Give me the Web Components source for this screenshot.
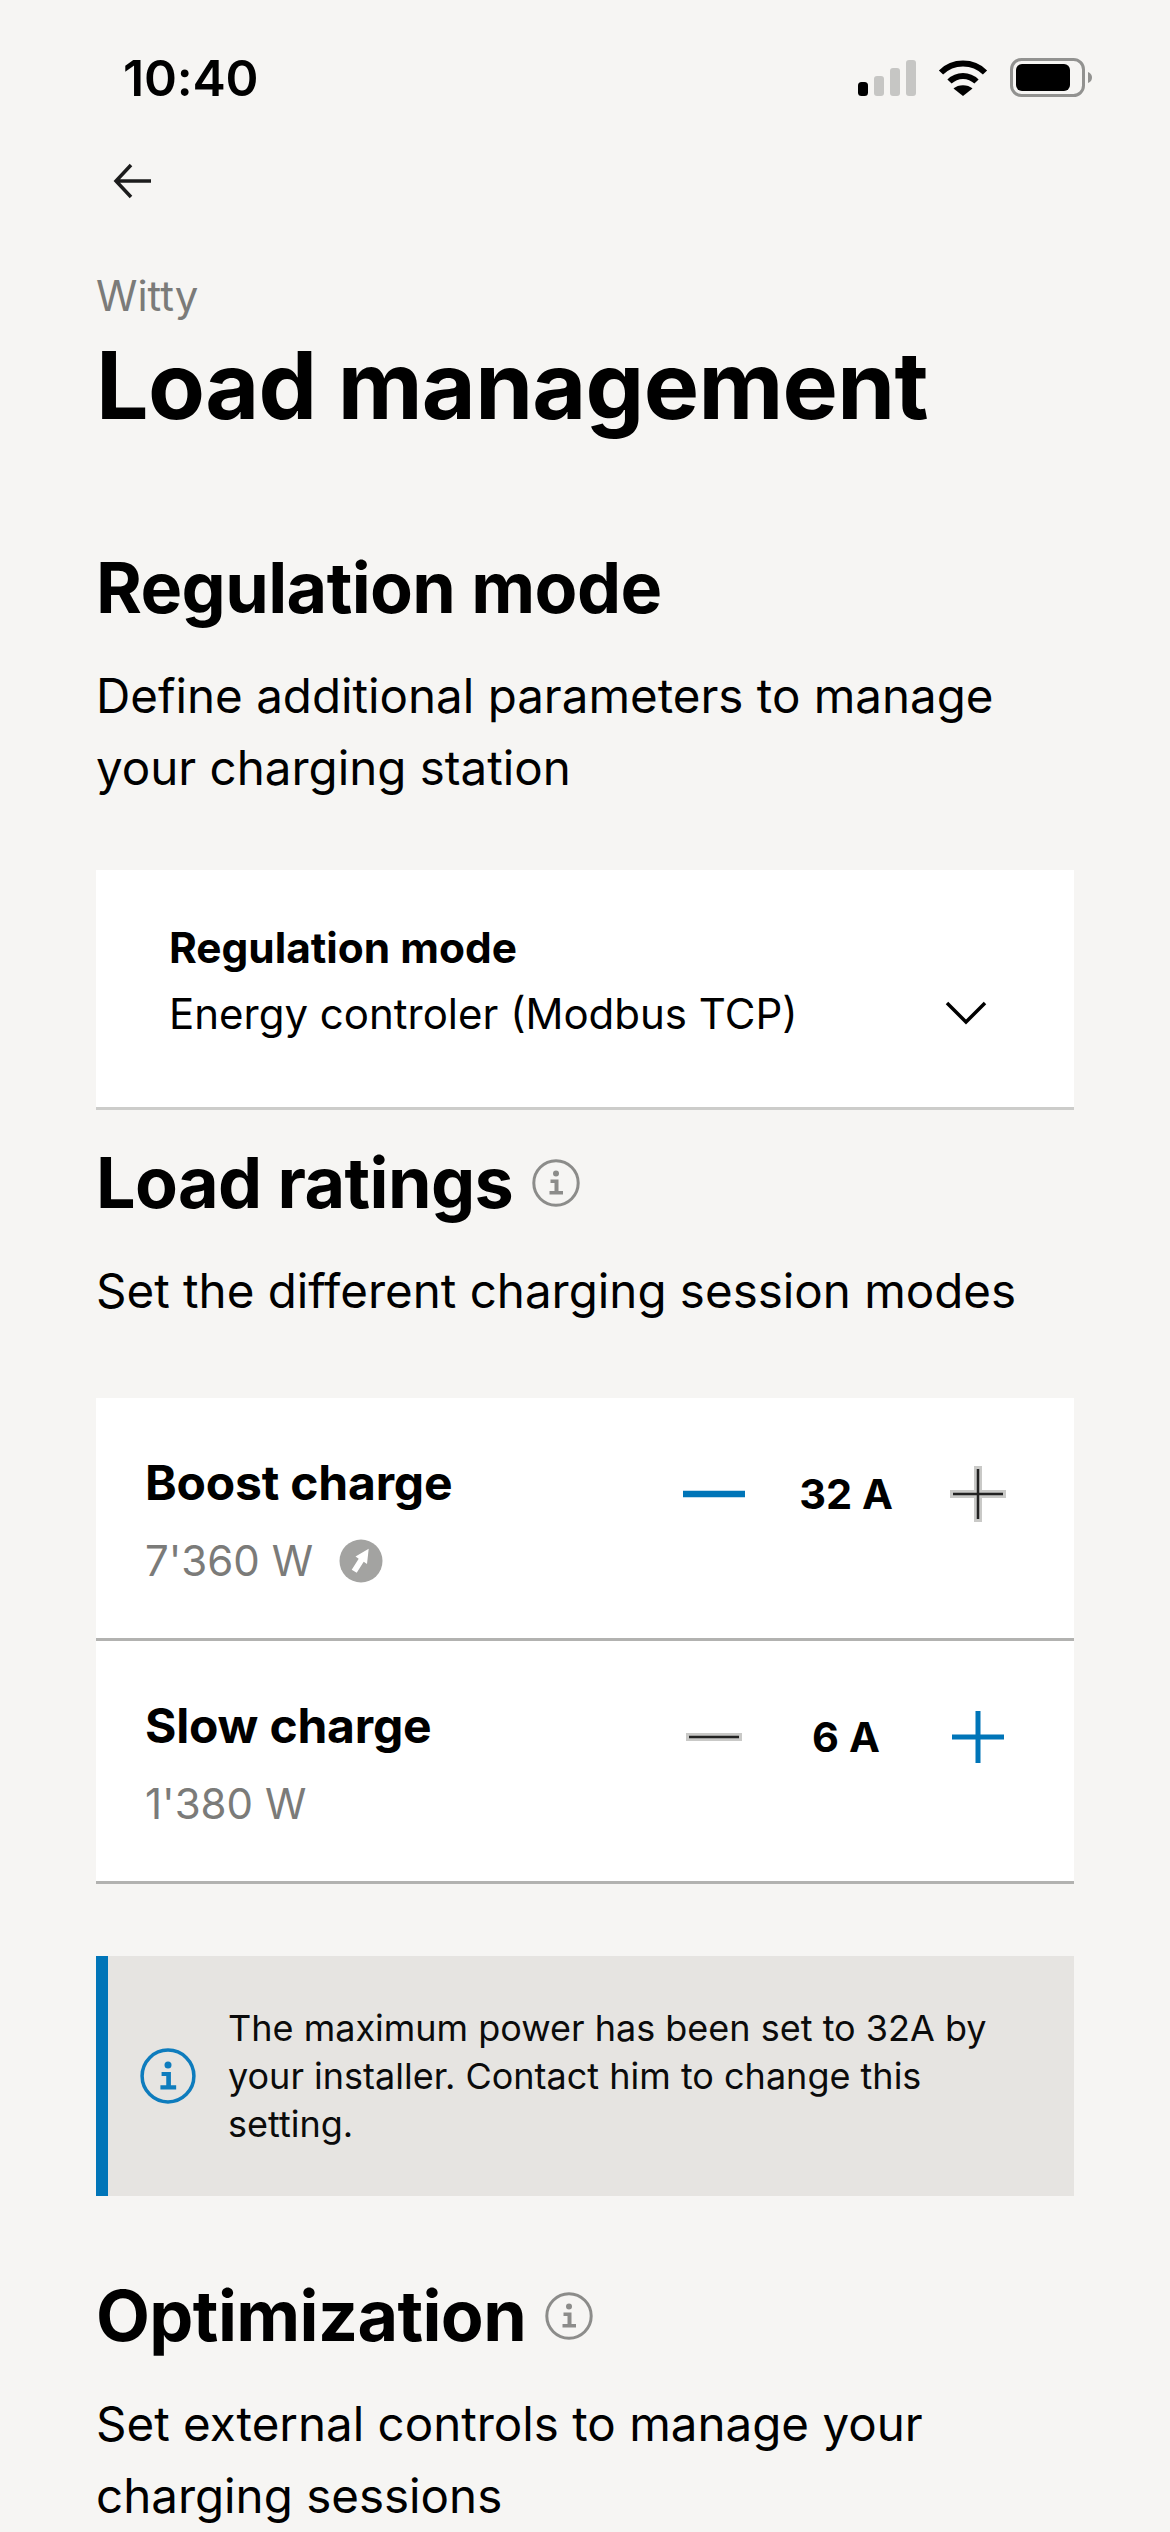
<!DOCTYPE html>
<html lang="en">
<head>
<meta charset="utf-8">
<title>Load management</title>
<style>
	html, body { margin: 0; height: 2532px; overflow: hidden; background: #f6f5f3; }
	body { font-family: Inter, "Liberation Sans", sans-serif; color: #000; }
	app-page { padding: 0 96px; }
</style>
</head>
<body>

<template id="t-info">
	<style>
		:host { display: inline-flex; width: var(--size, 48px); height: var(--size, 48px); color: #8c8c8a; flex: none; }
		svg { width: 100%; height: 100%; display: block; }
	</style>
	<svg viewBox="0 0 48 48" fill="none">
		<circle cx="24" cy="24" r="22.2" stroke="currentColor" stroke-width="3"/>
		<circle cx="24" cy="14.5" r="3" fill="currentColor"/>
		<path d="M18.5 20.5h8v11.5h4.5v3.5H17.5V32h5v-8h-4z" fill="currentColor"/>
	</svg>
</template>

<template id="t-status">
	<style>
		:host { display: flex; justify-content: space-between; align-items: center; height: 50px; padding: 53px 0 0 27px; margin-right: -18px; }
		.time { font-size: 50px; font-weight: 600; letter-spacing: -0.2px; line-height: 50px; }
		.icons { display: flex; align-items: center; gap: 22px; }
		svg { display: block; }
	</style>
	<span class="time">10:40</span>
	<span class="icons">
		<svg width="58" height="38" viewBox="0 0 58 38">
			<rect x="0" y="23" width="10" height="14" rx="3.5" fill="#000"/>
			<rect x="16" y="17" width="10" height="20" rx="3" fill="#c6c6c4"/>
			<rect x="32" y="9" width="10" height="28" rx="3" fill="#c6c6c4"/>
			<rect x="48" y="1" width="10" height="36" rx="3" fill="#c6c6c4"/>
		</svg>
		<svg width="50" height="38" viewBox="0 0 50 38" fill="none" stroke="#000" stroke-width="6">
			<path d="M3 13.5C15 1.5 35 1.5 47 13.5"/>
			<path d="M11.5 22.5C19 15 31 15 38.5 22.5"/>
			<path d="M25 37L15.5 29.5C20 25 30 25 34.5 29.5Z" fill="#000" stroke="none"/>
		</svg>
		<svg width="82" height="40" viewBox="0 0 82 40">
			<rect x="1.5" y="1.5" width="72" height="36" rx="10" fill="none" stroke="#929290" stroke-width="3"/>
			<rect x="6" y="6" width="54" height="27" rx="6" fill="#000"/>
			<path d="M78 14c3 1 4 3.500 4 5.500s-1 4.500-4 5.500z" fill="#929290"/>
		</svg>
	</span>
</template>

<template id="t-header">
	<style>
		:host { display: block; }
		.back { display: block; margin: 60px 0 0 17px; }
		.over { font-size: 42px; line-height: 52px; color: #7b7b79; margin-top: 71px; }
		h1 { margin: 13px 0 0; font-size: 93px; line-height: 100px; font-weight: 700; letter-spacing: -0.7px; }
	</style>
	<svg class="back" width="40" height="36" viewBox="0 0 40 36" fill="none" stroke="#1c1c1c" stroke-width="3.500">
		<path d="M38 18H3M18 2L3 18l15 16"/>
	</svg>
	<div class="over"><slot name="over"></slot></div>
	<h1><slot></slot></h1>
</template>

<template id="t-section">
	<style>
		:host { display: block; margin-top: var(--top, 0); }
		.head { display: flex; align-items: center; gap: var(--gap, 19px); }
		h2 { margin: 0; font-size: 70px; line-height: 84px; font-weight: 700; letter-spacing: -0.6px; }
		p { margin: 30px 0 0; font-size: 47.5px; line-height: 72px; }
	</style>
	<div class="head"><h2><slot name="title"></slot></h2><slot name="hint"></slot></div>
	<p><slot name="text"></slot></p>
</template>

<template id="t-select">
	<style>
		:host { display: flex; align-items: center; justify-content: space-between; background: #fff; border-bottom: 3px solid #ccccca; margin: 66px 0 31px; padding: 50px 87px 65px 73px; }
		.label { font-size: 42.4px; line-height: 56px; font-weight: 700; }
		.value { font-size: 42px; line-height: 56px; margin-top: 10px; }
		svg { display: block; margin-top: 64px; }
	</style>
	<div>
		<div class="label"><slot name="label"></slot></div>
		<div class="value"><slot name="value"></slot></div>
	</div>
	<svg width="42" height="24" viewBox="0 0 42 24" fill="none" stroke="#000" stroke-width="3.500"><path d="M2 2l19 19L40 2"/></svg>
</template>

<template id="t-rating">
	<style>
		:host { display: flex; align-items: flex-start; justify-content: space-between; background: #fff; border-bottom: 3px solid #b2b2b0; padding: 56px 64px 0 49px; height: 184px; }
		.name { font-size: 48px; line-height: 58px; font-weight: 700; letter-spacing: -0.2px; }
		.watt { display: flex; align-items: center; gap: 26px; font-size: 42px; line-height: 56px; color: #7b7b79; margin-top: 21px; }
		.watt svg { display: block; }
		.step { display: flex; align-items: center; margin-top: 8px; height: 64px; }
		.val { width: 200px; text-align: center; font-size: 41.5px; font-weight: 700; line-height: 56px; }
		.ic { width: 64px; height: 64px; display: block; flex: none; }
	</style>
	<div>
		<div class="name"><slot name="name"></slot></div>
		<div class="watt"><slot name="watt"></slot><slot name="boost"></slot></div>
	</div>
	<div class="step">
		<svg class="ic minus" viewBox="0 0 64 64"></svg>
		<span class="val"><slot name="val"></slot></span>
		<svg class="ic plus" viewBox="0 0 64 64"></svg>
	</div>
</template>

<template id="t-boost">
	<style>
		:host { display: block; }
		svg { display: block; }
	</style>
	<svg width="44" height="44" viewBox="0 0 44 44">
		<circle cx="22" cy="22" r="21.500" fill="#a3a3a1"/>
		<path d="M29.700 9.750L16.500 17.500l3.200 2.150-7 11 5 3.200 7-11 3.300 2.150z" fill="#fff"/>
	</svg>
</template>

<template id="t-notice">
	<style>
		:host { display: flex; align-items: center; gap: 32px; background: #e6e4e1; border-left: 12px solid #0075b8; padding: 36px 60px 36px 32px; margin-top: 72px; height: 168px; }
		.txt { font-size: 36px; line-height: 48px; color: #0b0b0b; }
		info-icon { --size: 56px; color: #0e7cbd; }
	</style>
	<info-icon></info-icon>
	<div class="txt"><slot></slot></div>
</template>

<app-page>
	<status-bar></status-bar>
	<page-header><span slot="over">Witty</span>Load management</page-header>

	<page-section style="--top:111px">
		<span slot="title">Regulation mode</span>
		<span slot="text">Define additional parameters to manage<br>your charging station</span>
	</page-section>
	<select-card>
		<span slot="label">Regulation mode</span>
		<span slot="value">Energy controler (Modbus TCP)</span>
	</select-card>

	<page-section>
		<span slot="title">Load ratings</span>
		<info-icon slot="hint"></info-icon>
		<span slot="text">Set the different charging session modes</span>
	</page-section>
	<rating-list>
		<rating-row active="minus">
			<span slot="name">Boost charge</span>
			<span slot="watt">7'360 W</span>
			<boost-icon slot="boost"></boost-icon>
			<span slot="val">32 A</span>
		</rating-row>
		<rating-row active="plus">
			<span slot="name">Slow charge</span>
			<span slot="watt">1'380 W</span>
			<span slot="val">6 A</span>
		</rating-row>
	</rating-list>

	<notice-box>The maximum power has been set to 32A by your installer. Contact him to change this setting.</notice-box>

	<page-section style="--top:78px">
		<span slot="title">Optimization</span>
		<info-icon slot="hint"></info-icon>
		<span slot="text">Set external controls to manage your<br>charging sessions</span>
	</page-section>
</app-page>

<script>
'use strict';

// every element here only clones its template, so one helper does it
function simple(name, templateId) {
	customElements.define(name, class extends HTMLElement {
		constructor() {
			super();
			const root = this.attachShadow({mode: 'open'});
			root.appendChild(document.getElementById(templateId).content.cloneNode(true));
		}
	});
}

simple('info-icon', 't-info');
simple('status-bar', 't-status');
simple('page-header', 't-header');
simple('page-section', 't-section');
simple('select-card', 't-select');
simple('boost-icon', 't-boost');
simple('notice-box', 't-notice');

class AppPage extends HTMLElement {
	constructor() {
		super();
		this.attachShadow({mode: 'open'}).innerHTML = `<style>:host { display: block; }</style><slot></slot>`;
	}
}
customElements.define('app-page', AppPage);

class RatingList extends HTMLElement {
	constructor() {
		super();
		this.attachShadow({mode: 'open'}).innerHTML = `<style>:host { display: block; margin-top: 71px; }</style><slot></slot>`;
	}
}
customElements.define('rating-list', RatingList);

const line = (d, color, w) => `<path d="${d}" stroke="${color}" stroke-width="${w}" fill="none"/>`;
const ICONS = {
	// active = blue and thick, disabled = dark hairline on a grey halo
	minus: {on: line('M1 32h62', '#0075b8', 6.5), off: line('M4 32h56', '#c9c9c7', 8) + line('M7 32h50', '#222', 2.5)},
	plus: {on: line('M6 32h52M32 6v52', '#0075b8', 5), off: line('M4 32h56M32 4v56', '#c9c9c7', 8) + line('M7 32h50M32 7v50', '#222', 2.5)}
};

class RatingRow extends HTMLElement {
	constructor() {
		super();
		const root = this.attachShadow({mode: 'open'});
		root.appendChild(document.getElementById('t-rating').content.cloneNode(true));
	}
	connectedCallback() {
		const active = this.getAttribute('active');
		this.shadowRoot.querySelector('.minus').innerHTML = active === 'minus' ? ICONS.minus.on : ICONS.minus.off;
		this.shadowRoot.querySelector('.plus').innerHTML = active === 'plus' ? ICONS.plus.on : ICONS.plus.off;
	}
}
customElements.define('rating-row', RatingRow);
</script>
</body>
</html>
